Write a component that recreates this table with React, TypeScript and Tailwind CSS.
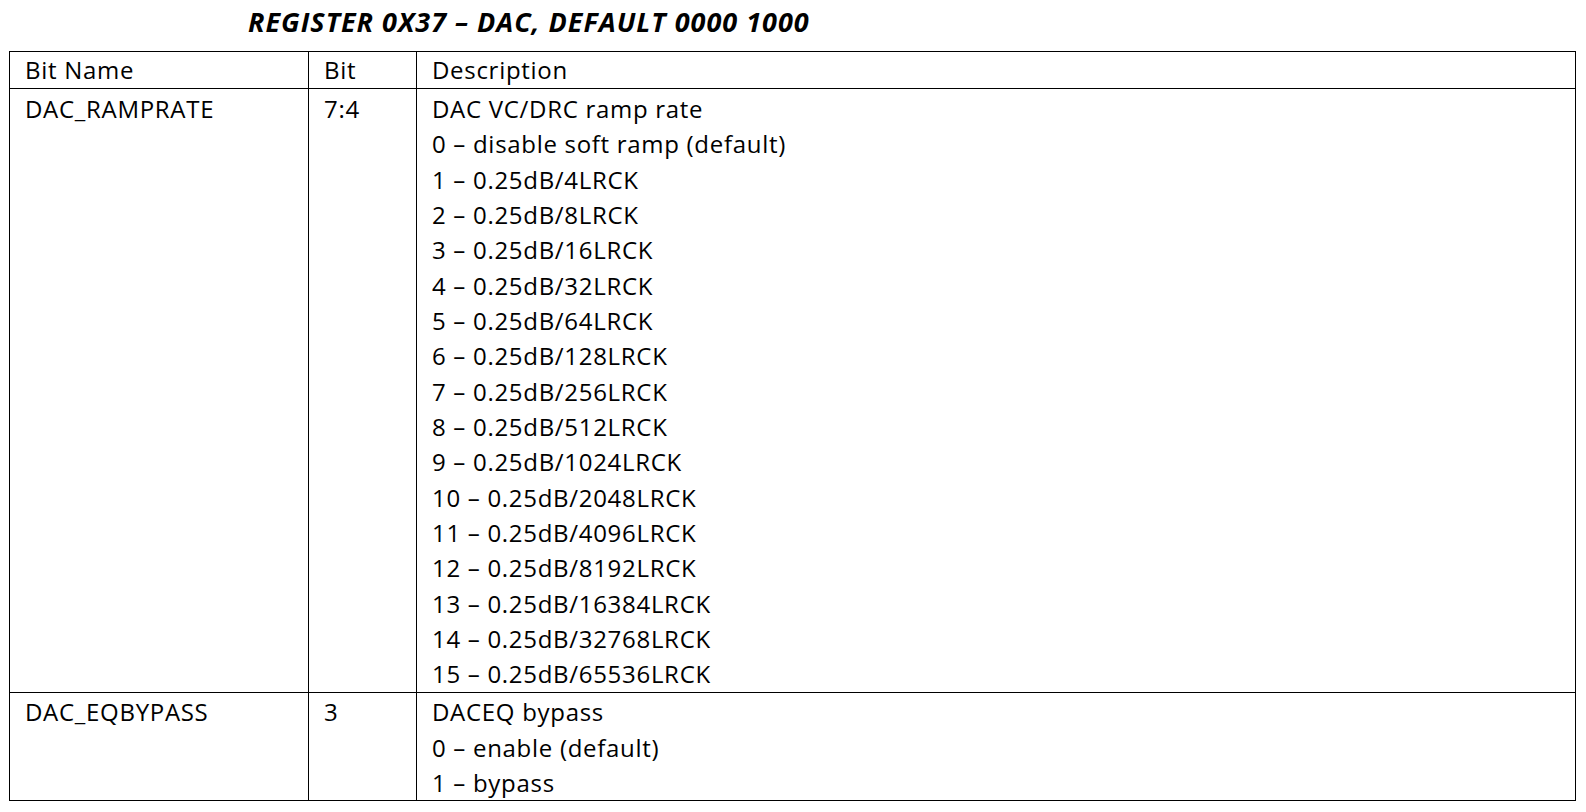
import React from "react";

const rampRates = [
  "0 – disable soft ramp (default)",
  "1 – 0.25dB/4LRCK",
  "2 – 0.25dB/8LRCK",
  "3 – 0.25dB/16LRCK",
  "4 – 0.25dB/32LRCK",
  "5 – 0.25dB/64LRCK",
  "6 – 0.25dB/128LRCK",
  "7 – 0.25dB/256LRCK",
  "8 – 0.25dB/512LRCK",
  "9 – 0.25dB/1024LRCK",
  "10 – 0.25dB/2048LRCK",
  "11 – 0.25dB/4096LRCK",
  "12 – 0.25dB/8192LRCK",
  "13 – 0.25dB/16384LRCK",
  "14 – 0.25dB/32768LRCK",
  "15 – 0.25dB/65536LRCK",
];

const rows = [
  {
    name: "DAC_RAMPRATE",
    bit: "7:4",
    lines: ["DAC VC/DRC ramp rate", ...rampRates],
  },
  {
    name: "DAC_EQBYPASS",
    bit: "3",
    lines: ["DACEQ bypass", "0 – enable (default)", "1 – bypass"],
  },
];

export default function App() {
  return (
    <div className="min-h-screen bg-white text-black font-['Open_Sans','Liberation_Sans',sans-serif]">
      <h1 className="pl-[248px] pt-[3px] h-[51px] text-[27px] leading-[38px] tracking-[1px] font-bold italic">
        REGISTER 0X37 – DAC, DEFAULT 0000 1000
      </h1>
      <table className="ml-[9px] w-[1567px] border-collapse text-[24px] leading-[35.35px] tracking-[0.7px]">
        <thead>
          <tr>
            <th className="w-[299px] border border-black pl-[15px] pb-px text-left font-normal align-top">
              Bit Name
            </th>
            <th className="w-[108px] border border-black pl-[15px] pb-px text-left font-normal align-top">
              Bit
            </th>
            <th className="border border-black pl-[15px] pb-px text-left font-normal align-top">
              Description
            </th>
          </tr>
        </thead>
        <tbody>
          {rows.map((row) => (
            <tr key={row.name}>
              <td className="border border-black pl-[15px] pt-[1.5px] align-top">{row.name}</td>
              <td className="border border-black pl-[15px] pt-[1.5px] align-top">{row.bit}</td>
              <td className="border border-black pl-[15px] pt-[1.5px] align-top">
                {row.lines.map((line) => (
                  <div key={line}>{line}</div>
                ))}
              </td>
            </tr>
          ))}
        </tbody>
      </table>
    </div>
  );
}
